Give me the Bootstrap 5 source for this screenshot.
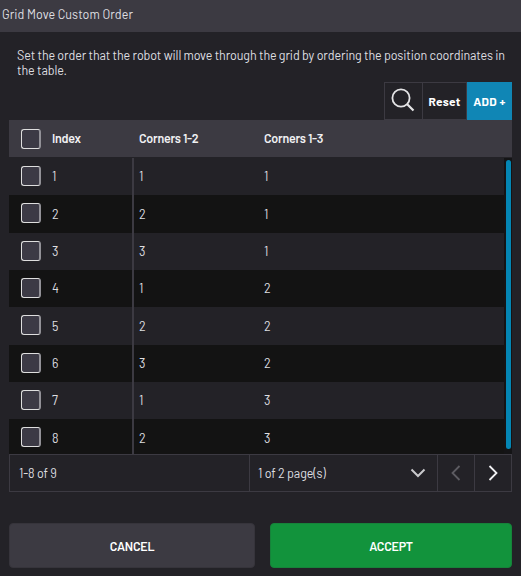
<!DOCTYPE html>
<html lang="en">
<head>
<meta charset="utf-8">
<meta name="viewport" content="width=device-width, initial-scale=1">
<title>Grid Move Custom Order</title>
<link href="https://cdn.jsdelivr.net/npm/bootstrap@5.3.0/dist/css/bootstrap.min.css" rel="stylesheet">
<style>
body{background:#232227;color:#dedee0;font:12.5px/15px Barlow,Roboto,"Liberation Sans",sans-serif;height:576px;overflow:hidden}
.title-bar{height:32px;background:#3c3a42;padding:7px 2px 0;letter-spacing:.06px}
.intro{margin:16px 0 0 17px;height:34px;white-space:nowrap}
.intro-a{letter-spacing:-.115px}
.intro-b{letter-spacing:-.1px}
.panel{margin:0 9px}
.tools{height:38px}
.tool{border:1px solid #3c3a42;border-radius:0;background:none;color:#fff;font:700 12px/15px Barlow,Roboto,sans-serif;padding:0;letter-spacing:.25px}
.tool-find{width:39px;padding:0 2px 2px 0}.tool-reset{width:45px;margin-left:-1px}.tool-add{width:45px;background:#1086b5;border-color:#1086b5}
.head-row{height:37px;background:#3c3a42;font-weight:600;color:#f0f0f2;letter-spacing:-.27px}
.grid-body{height:297px;padding-top:1px;overflow:hidden;position:relative}
.grid-row{height:37.333px}
.grid-row>div{padding-top:.4px}
.grid-row:nth-child(even){background:#131313}
.cell-index{width:124px;padding-left:12px}
.cell-a{width:125px;padding-left:6px}
.cell-b{padding-left:6px}
.grid-body .cell-index{border-right:2px solid #3c3a42;width:125px}
.grid-body .cell-a{width:124px;padding-left:5px}
.tick{width:20px;height:20px;border:1px solid #dedede;border-right:2px solid #929197;border-radius:3px;background:#3c3a45;margin:0 11px 0 0;flex:none}
.grid-row .tick{margin-bottom:1.4px}
.track{position:absolute;right:0;top:1px;bottom:0;width:8px;background:#141416;padding:2px 2px 5px}
.thumb{height:100%;width:5px;border-radius:3px;background:#0486b4}
.pager{height:38px;border:1px solid #3c3a42;letter-spacing:-.1px}
.pager>*{border-right:1px solid #3c3a42}
.pager>:last-child{border-right:0}
.count{width:240px;padding-left:9px}
.pages{width:188px;padding:0 11px 0 8px;flex:1 0 auto}
.arrow{width:37px}
.pager>:last-child{width:36px}
.actions{margin:31px 9px 0;gap:15px}
.action{height:45px;border:1px solid #36343b;border-radius:4px;background:#3c3a42;color:#fff;font:600 12.5px/15px Barlow,Roboto,sans-serif;letter-spacing:-.25px;padding:1px 0 0;width:246px}
.accept{background:#12933c;border-color:#16833a;width:242px}
svg{display:block;fill:none}
</style>
<script src="https://cdn.jsdelivr.net/npm/bootstrap@5.3.0/dist/js/bootstrap.bundle.min.js"></script>
</head>
<body>
<header class="title-bar">Grid Move Custom Order</header>
<p class="intro"><span class="intro-a">Set the order that the robot will move through the grid by ordering the position coordinates in</span><br><span class="intro-b">the table.</span></p>
<main class="panel">
<div class="tools d-flex justify-content-end">
<button class="btn tool tool-find d-flex align-items-center justify-content-center" aria-label="Search"><svg width="24" height="24" viewBox="0 0 24 24" stroke="#e4e4e6" stroke-width="1.8"><circle cx="10" cy="10" r="8.6"/><path d="M16 16l6.5 6.5" stroke-width="2.2"/></svg></button>
<button class="btn tool tool-reset">Reset</button>
<button class="btn tool tool-add">ADD +</button>
</div>
<div class="head-row d-flex align-items-center"><div class="cell-index d-flex align-items-center"><span class="tick"></span>Index</div><div class="cell-a">Corners 1-2</div><div class="cell-b">Corners 1-3</div></div>
<div class="grid-body">
<div class="grid-row d-flex"><div class="cell-index d-flex align-items-center"><span class="tick"></span>1</div><div class="cell-a d-flex align-items-center">1</div><div class="cell-b d-flex align-items-center">1</div></div>
<div class="grid-row d-flex"><div class="cell-index d-flex align-items-center"><span class="tick"></span>2</div><div class="cell-a d-flex align-items-center">2</div><div class="cell-b d-flex align-items-center">1</div></div>
<div class="grid-row d-flex"><div class="cell-index d-flex align-items-center"><span class="tick"></span>3</div><div class="cell-a d-flex align-items-center">3</div><div class="cell-b d-flex align-items-center">1</div></div>
<div class="grid-row d-flex"><div class="cell-index d-flex align-items-center"><span class="tick"></span>4</div><div class="cell-a d-flex align-items-center">1</div><div class="cell-b d-flex align-items-center">2</div></div>
<div class="grid-row d-flex"><div class="cell-index d-flex align-items-center"><span class="tick"></span>5</div><div class="cell-a d-flex align-items-center">2</div><div class="cell-b d-flex align-items-center">2</div></div>
<div class="grid-row d-flex"><div class="cell-index d-flex align-items-center"><span class="tick"></span>6</div><div class="cell-a d-flex align-items-center">3</div><div class="cell-b d-flex align-items-center">2</div></div>
<div class="grid-row d-flex"><div class="cell-index d-flex align-items-center"><span class="tick"></span>7</div><div class="cell-a d-flex align-items-center">1</div><div class="cell-b d-flex align-items-center">3</div></div>
<div class="grid-row d-flex"><div class="cell-index d-flex align-items-center"><span class="tick"></span>8</div><div class="cell-a d-flex align-items-center">2</div><div class="cell-b d-flex align-items-center">3</div></div>
<div class="track"><div class="thumb"></div></div>
</div>
<div class="pager d-flex align-items-stretch">
<div class="count d-flex align-items-center">1-8 of 9</div>
<div class="pages d-flex align-items-center justify-content-between"><span>1 of 2 page(s)</span><svg width="16" height="10" viewBox="0 0 16 10" stroke="#c9c9cc" stroke-width="2"><path d="M1.5 1.5L8 8l6.500-6.500"/></svg></div>
<div class="arrow d-flex align-items-center justify-content-center"><svg width="10" height="16" viewBox="0 0 10 16" stroke="#5d5c62" stroke-width="1.8"><path d="M8.500 1L1.500 8l7 7"/></svg></div>
<div class="arrow d-flex align-items-center justify-content-center"><svg width="10" height="16" viewBox="0 0 10 16" stroke="#f2f2f4" stroke-width="1.8"><path d="M1.500 1l7 7-7 7"/></svg></div>
</div>
</main>
<div class="actions d-flex"><button class="btn action">CANCEL</button><button class="btn action accept">ACCEPT</button></div>
</body>
</html>
